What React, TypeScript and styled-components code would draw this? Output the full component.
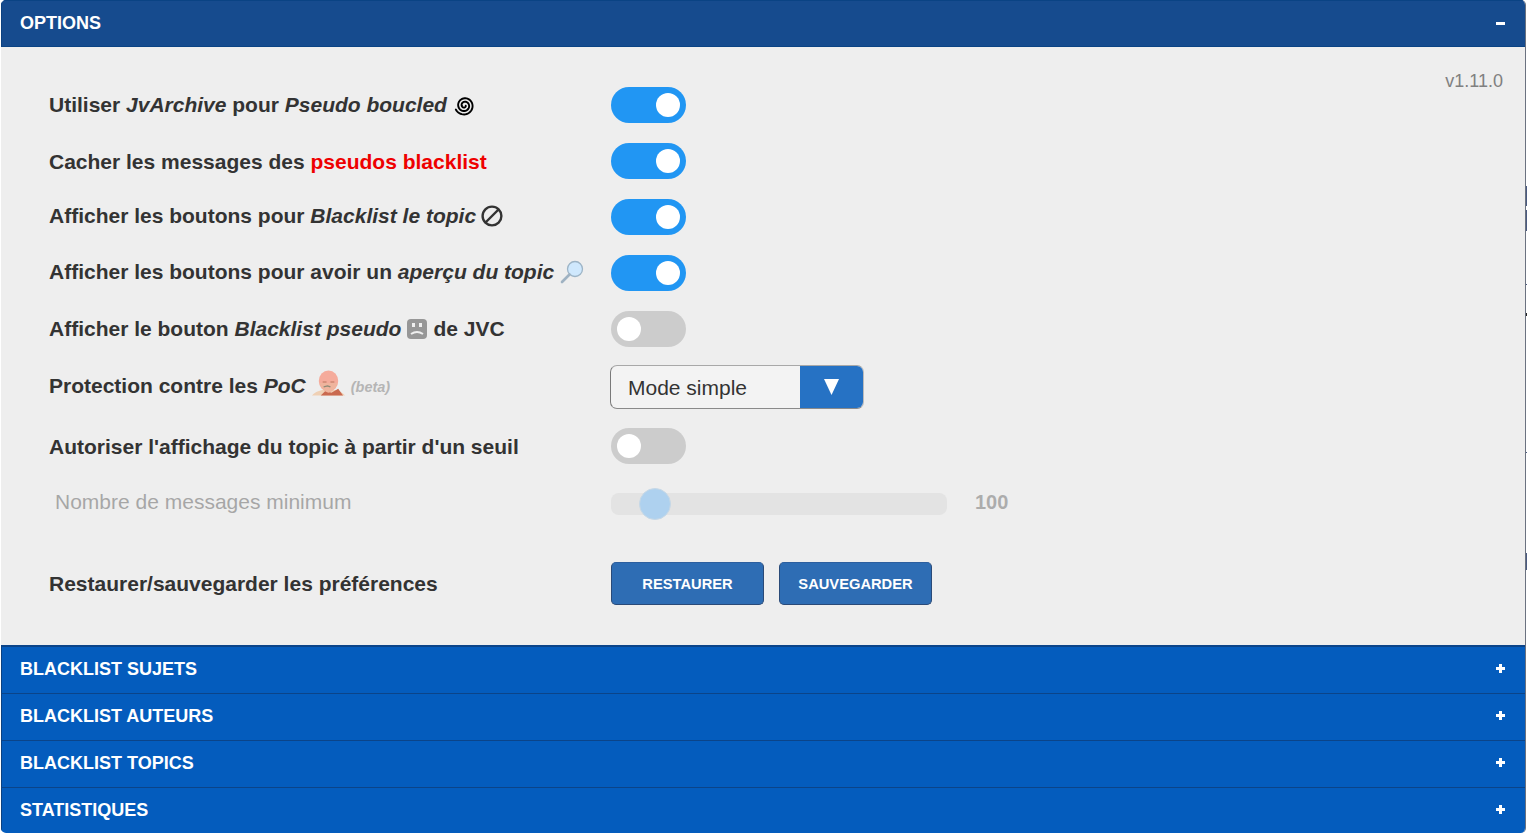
import React from "react";
import styled, { createGlobalStyle } from "styled-components";

const Global = createGlobalStyle`
  html, body { margin: 0; padding: 0; background: #fff; }
  body { font-family: "Liberation Sans", Arial, sans-serif; overflow: hidden; }
  #root { position: relative; width: 1527px; height: 834px; overflow: hidden; }
`;

const Panel = styled.div`
  box-sizing: border-box;
  width: 1525px;
  height: 833px;
  margin-left: 1px;
  border-right: 1px solid #6b7280;
  border-radius: 5px;
  overflow: hidden;
  display: flex;
  flex-direction: column;
`;

const EdgeMark = styled.div<{ $top: number; $h: number; $dark?: boolean }>`
  position: absolute;
  right: 0;
  top: ${(p) => p.$top}px;
  width: 1px;
  height: ${(p) => p.$h}px;
  background: ${(p) => (p.$dark ? "#222" : "#4a5a80")};
`;

const Header = styled.div<{ $open?: boolean; $first?: boolean }>`
  box-sizing: border-box;
  flex: none;
  height: ${(p) => (p.$first ? 48 : 47)}px;
  display: flex;
  align-items: center;
  justify-content: space-between;
  padding: 0 20px ${(p) => (p.$open ? 0 : 2)}px 18px;
  background: ${(p) => (p.$open ? "#164b8e" : "#045cbd")};
  border-left: 1px solid #0c4180;
  border-top: ${(p) => (p.$first ? 2 : 1)}px solid ${(p) => (p.$open ? "#0a4384" : "#0b4489")};
  border-bottom: ${(p) => (p.$open ? "1px solid #0a4384" : "none")};
  color: #fff;
  font-size: 18px;
  font-weight: 700;
`;

const Sign = styled.span<{ $plus?: boolean }>`
  position: relative;
  flex: none;
  width: 9px;
  height: 9px;
  margin-top: -1px;
  &::before {
    content: "";
    position: absolute;
    left: 0;
    top: 3px;
    width: 9px;
    height: 3px;
    background: #fff;
  }
  &::after {
    content: "";
    display: ${(p) => (p.$plus ? "block" : "none")};
    position: absolute;
    left: 3px;
    top: 0;
    width: 3px;
    height: 9px;
    background: #fff;
  }
`;

const Body = styled.div`
  position: relative;
  box-sizing: border-box;
  flex: none;
  height: 598px;
  padding: 40px 0 0 48px;
  background: #eeeeee;
`;

const Version = styled.div`
  position: absolute;
  top: 24px;
  right: 22px;
  font-size: 18px;
  color: #808080;
`;

const Row = styled.div<{ $h: number; $mt?: number; $faded?: boolean }>`
  display: flex;
  align-items: center;
  height: ${(p) => p.$h}px;
  margin-top: ${(p) => p.$mt ?? 20}px;
  opacity: ${(p) => (p.$faded ? 0.35 : 1)};
`;

const Label = styled.div<{ $light?: boolean; $dy?: number }>`
  flex: none;
  width: 562px;
  display: flex;
  align-items: center;
  gap: 6px;
  white-space: pre;
  font-size: 21px;
  font-weight: ${(p) => (p.$light ? 400 : 700)};
  color: ${(p) => (p.$light ? "#222" : "#333")};
  padding-left: ${(p) => (p.$light ? 6 : 0)}px;
  padding-top: ${(p) => Math.max(0, (p.$dy ?? 0) * 2)}px;
  padding-bottom: ${(p) => Math.max(0, -(p.$dy ?? 0) * 2)}px;
  box-sizing: border-box;
  em { font-style: italic; }
`;

const Red = styled.span`color: #ee0000;`;

const Beta = styled.em`
  margin-top: 2px;
  font-size: 14.5px;
  font-weight: 700;
  color: #b5b5b5;
`;

const Toggle = styled.div<{ $on?: boolean }>`
  flex: none;
  position: relative;
  width: 75px;
  height: 36px;
  border-radius: 18px;
  background: ${(p) => (p.$on ? "#2196f3" : "#cccccc")};
  &::after {
    content: "";
    position: absolute;
    top: 6px;
    left: ${(p) => (p.$on ? 45 : 6)}px;
    width: 24px;
    height: 24px;
    border-radius: 50%;
    background: #fff;
  }
`;

const Select = styled.div`
  flex: none;
  box-sizing: border-box;
  margin-left: -1px;
  width: 254px;
  height: 44px;
  display: flex;
  border: 1px solid #8a8a8a;
  border-color: #a8a8a8 #bbbbbb #8a8a8a #7a7a7a;
  border-radius: 7px;
  overflow: hidden;
  background: #f3f3f3;
`;

const SelectText = styled.div`
  flex: 1;
  padding: 1px 0 0 17px;
  display: flex;
  align-items: center;
  font-size: 21px;
  color: #333;
`;

const SelectArrow = styled.div`
  flex: none;
  width: 63px;
  display: flex;
  align-items: center;
  justify-content: center;
  background: #2672c4;
`;

const Slider = styled.div`
  flex: none;
  position: relative;
  width: 336px;
  height: 22px;
  border-radius: 8px;
  background: #cfcfcf;
`;

const Thumb = styled.div`
  position: absolute;
  top: -5px;
  left: 28px;
  box-sizing: border-box;
  width: 32px;
  height: 32px;
  border-radius: 50%;
  background: #3a9ef1;
  border: 1px solid #7fb0d8;
`;

const Value = styled.div`
  margin: 0 0 3px 28px;
  font-size: 20px;
  font-weight: 700;
  color: #333;
`;

const Buttons = styled.div`
  display: flex;
  gap: 15px;
`;

const Button = styled.button`
  box-sizing: border-box;
  width: 153px;
  height: 43px;
  padding: 0;
  border: 1px solid #2a4a78;
  border-top-color: #2c5f9f;
  border-radius: 5px;
  background: #2e6db4;
  color: #fff;
  font-family: inherit;
  font-size: 14.7px;
  font-weight: 700;
`;

const Icon = styled.svg<{ $ml?: number; $mb?: number }>`
  flex: none;
  margin-left: ${(p) => p.$ml ?? 0}px;
  margin-bottom: ${(p) => p.$mb ?? 0}px;
`;

const spiralPath = Array.from({ length: 110 }, (_, i) => {
  const t = i / 109;
  const a = 0.2 + t * Math.PI * 4.8;
  const r = 1.2 + t * 7.9;
  return `${i === 0 ? "M" : "L"}${(10 + r * Math.cos(a)).toFixed(2)} ${(10 + r * Math.sin(a)).toFixed(2)}`;
}).join("");

const Spiral = () => (
  <Icon $ml={1} width="21" height="21" viewBox="0 0 20 20" fill="none" stroke="#000" strokeWidth="1.800" strokeLinecap="round">
    <path d={spiralPath} />
  </Icon>
);

const Ban = () => (
  <Icon $ml={-1} width="22" height="22" viewBox="0 0 22 22" fill="none" stroke="#333" strokeWidth="2.400">
    <circle cx="11" cy="11" r="9.400" />
    <path d="M4.500 17.500 17.500 4.500" />
  </Icon>
);

const Lens = () => (
  <Icon width="24" height="24" viewBox="0 0 24 24" fill="none">
    <circle cx="15" cy="9" r="7.500" fill="#cfe8fd" stroke="#9db4c6" strokeWidth="1.300" />
    <path d="M9.500 14.500 2 22" stroke="#9fb2c2" strokeWidth="2.600" strokeLinecap="round" />
  </Icon>
);

const Sad = () => (
  <Icon width="20" height="20" viewBox="0 0 20 20">
    <rect width="20" height="20" rx="4" fill="#979797" />
    <rect x="5" y="4" width="3" height="4" fill="#efefef" />
    <rect x="12" y="4" width="3" height="4" fill="#efefef" />
    <path d="M4 15q6-4 12 0" stroke="#efefef" strokeWidth="2" fill="none" />
  </Icon>
);

const Baby = () => (
  <Icon $mb={6} width="33" height="26" viewBox="0 0 34 26">
    <path d="M0 26c3-4 8-5 12-6h10c5 1 9 2 12 6z" fill="#efd0b4" />
    <path d="M9 26l5-5 6 2 7-4 5 7z" fill="#c9694f" />
    <ellipse cx="17" cy="11" rx="10" ry="11" fill="#f5ab9b" />
    <path d="M8 13c1 5 5 9 9 10 4-1 8-5 9-10z" fill="#efb49d" />
    <path d="M11 12h4M19 12h4" stroke="#b9785f" strokeWidth="1.200" />
    <path d="M12 17l4-1 3 1" stroke="#8f8a76" strokeWidth="1.500" fill="none" />
  </Icon>
);

const ArrowDown = () => (
  <svg width="15" height="16" viewBox="0 0 15 16">
    <path d="M0 0h15L7.500 16z" fill="#fff" />
  </svg>
);

const closed = ["BLACKLIST SUJETS", "BLACKLIST AUTEURS", "BLACKLIST TOPICS", "STATISTIQUES"];
const marks = [
  { top: 186, h: 20 },
  { top: 210, h: 21 },
  { top: 284, h: 1 },
  { top: 313, h: 3, dark: true },
  { top: 452, h: 1 },
  { top: 553, h: 17 },
];

export default function App() {
  return (
    <>
      <Global />
      <Panel>
        <Header $open>
          <span>OPTIONS</span>
          <Sign />
        </Header>
        <Body>
          <Version>v1.11.0</Version>
          <Row $h={36} $mt={0}>
            <Label><span>Utiliser <em>JvArchive</em> pour <em>Pseudo boucled</em></span><Spiral /></Label>
            <Toggle $on />
          </Row>
          <Row $h={36}>
            <Label $dy={1}><span>Cacher les messages des <Red>pseudos blacklist</Red></span></Label>
            <Toggle $on />
          </Row>
          <Row $h={36}>
            <Label $dy={-1}><span>Afficher les boutons pour <em>Blacklist le topic</em></span><Ban /></Label>
            <Toggle $on />
          </Row>
          <Row $h={36}>
            <Label $dy={-1}><span>Afficher les boutons pour avoir un <em>aperçu du topic</em></span><Lens /></Label>
            <Toggle $on />
          </Row>
          <Row $h={36}>
            <Label><span>Afficher le bouton <em>Blacklist pseudo</em></span><Sad /><span>de JVC</span></Label>
            <Toggle />
          </Row>
          <Row $h={44} $mt={18}>
            <Label $dy={-1}><span>Protection contre les <em>PoC</em></span><Baby /><Beta>(beta)</Beta></Label>
            <Select>
              <SelectText>Mode simple</SelectText>
              <SelectArrow><ArrowDown /></SelectArrow>
            </Select>
          </Row>
          <Row $h={36} $mt={19}>
            <Label $dy={1}><span>Autoriser l'affichage du topic à partir d'un seuil</span></Label>
            <Toggle />
          </Row>
          <Row $h={22} $mt={29} $faded>
            <Label $light $dy={-2}><span>Nombre de messages minimum</span></Label>
            <Slider><Thumb /></Slider>
            <Value>100</Value>
          </Row>
          <Row $h={43} $mt={47}>
            <Label><span>Restaurer/sauvegarder les préférences</span></Label>
            <Buttons>
              <Button>RESTAURER</Button>
              <Button>SAUVEGARDER</Button>
            </Buttons>
          </Row>
        </Body>
        {closed.map((t, i) => (
          <Header key={t} $first={i === 0}>
            <span>{t}</span>
            <Sign $plus />
          </Header>
        ))}
      </Panel>
      {marks.map((m) => (
        <EdgeMark key={m.top} $top={m.top} $h={m.h} $dark={m.dark} />
      ))}
    </>
  );
}
